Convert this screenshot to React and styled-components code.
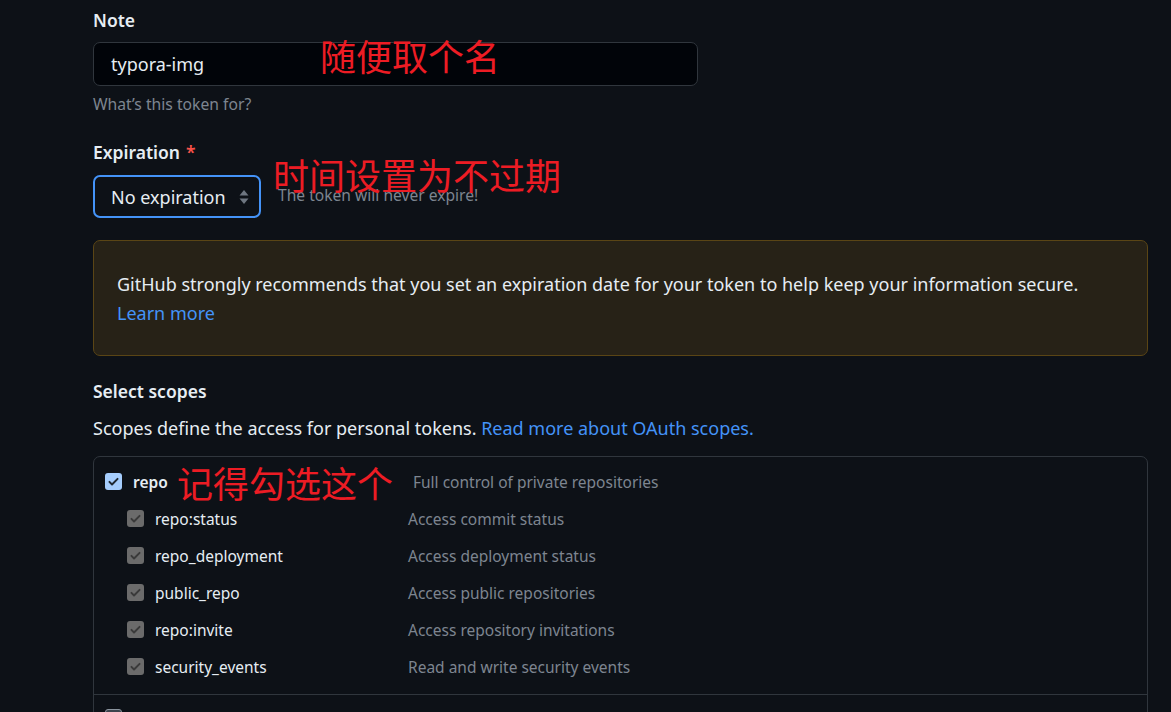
import React from "react";
import styled, { createGlobalStyle } from "styled-components";

const Global = createGlobalStyle`
  html, body { margin: 0; padding: 0; background: #0d1117; overflow: hidden; }
  body { font-family: "Noto Sans", "Open Sans", sans-serif; color: #e6edf3; }
  * { box-sizing: border-box; }
`;

const Page = styled.div`
  width: 1171px;
  height: 712px;
  overflow: hidden;
  padding: 7px 23px 0 93px;
  font-size: 18px;
`;

const Label = styled.div`
  font-weight: 600;
  font-size: 17.5px;
  line-height: 26px;
  margin-top: ${(p) => p.$mt || 0}px;
  margin-bottom: ${(p) => p.$mb || 0}px;
`;

const Required = styled.span`
  color: #f85149;
  margin-left: 6px;
`;

const Anchor = styled.div`
  position: relative;
`;

const Annotation = styled.span`
  position: absolute;
  left: ${(p) => p.$x}px;
  top: ${(p) => p.$y}px;
  font-family: "Noto Sans CJK SC", sans-serif;
  font-size: 36px;
  font-weight: 400;
  line-height: 1;
  color: #ed1c24;
  white-space: nowrap;
  pointer-events: none;
  z-index: 2;
`;

const TextInput = styled.div`
  width: 605px;
  height: 44px;
  background: #010409;
  border: 1px solid #30363d;
  border-radius: 7px;
  display: flex;
  align-items: center;
  padding-left: 17px;
`;

const Hint = styled.div`
  color: #7d8590;
  font-size: 15.7px;
  line-height: 22px;
  margin-top: 7px;
`;

const SelectRow = styled.div`
  display: flex;
  align-items: center;
  gap: 17px;
`;

const Select = styled.div`
  width: 168px;
  height: 43px;
  border: 2px solid #4493f8;
  border-radius: 7px;
  display: flex;
  align-items: center;
  justify-content: space-between;
  padding: 0 10px 0 16px;
`;

const Muted = styled.span`
  color: #7d8590;
  font-size: 15.6px;
  margin-top: -3px;
`;

const Warning = styled.div`
  margin-top: 22px;
  background: #272217;
  border: 1px solid #5a4515;
  border-radius: 7px;
  padding: 29px 23px 27px;
  line-height: 29px;
`;

const Link = styled.span`
  color: #4493f8;
`;

const Paragraph = styled.div`
  line-height: 26px;
  margin-top: 11px;
`;

const ScopeBox = styled.div`
  margin-top: 15px;
  border: 1px solid #30363d;
  border-radius: 7px;
  padding-top: 6px;
  font-size: 15.5px;
`;

const Group = styled.div`
  padding: ${(p) => (p.$last ? "4px 0 0 11px" : "0 0 9px 11px")};
  border-bottom: ${(p) => (p.$last ? "none" : "1px solid #30363d")};
`;

const Row = styled.div`
  position: relative;
  display: flex;
  align-items: center;
  height: 37px;
  padding-left: ${(p) => p.$indent || 0}px;
`;

const Name = styled.div`
  display: flex;
  align-items: center;
  gap: 11px;
  width: ${(p) => p.$w}px;
  font-weight: ${(p) => (p.$bold ? 600 : 400)};
`;

const Desc = styled.div`
  color: #7d8590;
`;

const Box = styled.span`
  width: 17px;
  height: 17px;
  border-radius: 3px;
  display: inline-flex;
  align-items: center;
  justify-content: center;
  flex: none;
  background: ${(p) => (p.$kind === "on" ? "#a5cdfd" : p.$kind === "dis" ? "#6b6b6b" : "#3d444d")};
  border: ${(p) => (p.$kind === "off" ? "1px solid #8b949e" : "none")};
`;

const Check = ({ kind }) => (
  <Box $kind={kind}>
    {kind !== "off" && (
      <svg width="13" height="13" viewBox="0 0 16 16">
        <path
          d="M3 8.5l3.2 3.2L13 4.8"
          fill="none"
          stroke={kind === "on" ? "#1f2933" : "#3a3a3a"}
          strokeWidth="2.4"
          strokeLinecap="round"
          strokeLinejoin="round"
        />
      </svg>
    )}
  </Box>
);

const Arrows = () => (
  <svg width="10" height="16" viewBox="0 0 10 16">
    <path d="M5 1L9.5 6.5H0.5z" fill="#6e7681" />
    <path d="M5 15L9.5 9.5H0.5z" fill="#6e7681" />
  </svg>
);

const subScopes = [
  ["repo:status", "Access commit status"],
  ["repo_deployment", "Access deployment status"],
  ["public_repo", "Access public repositories"],
  ["repo:invite", "Access repository invitations"],
  ["security_events", "Read and write security events"],
];

export default function App() {
  return (
    <>
      <Global />
      <Page>
        <Label $mb={9}>Note</Label>
        <Anchor>
          <TextInput>typora-img</TextInput>
          <Annotation $x={227} $y={-5}>随便取个名</Annotation>
        </Anchor>
        <Hint>What’s this token for?</Hint>

        <Label $mt={24} $mb={10}>
          Expiration<Required>*</Required>
        </Label>
        <Anchor>
          <SelectRow>
            <Select>
              <span>No expiration</span>
              <Arrows />
            </Select>
            <Muted>The token will never expire!</Muted>
          </SelectRow>
          <Annotation $x={180} $y={-19}>时间设置为不过期</Annotation>
        </Anchor>

        <Warning>
          GitHub strongly recommends that you set an expiration date for your token to help keep your information secure.
          <br />
          <Link>Learn more</Link>
        </Warning>

        <Label $mt={22}>Select scopes</Label>
        <Paragraph>
          Scopes define the access for personal tokens. <Link>Read more about OAuth scopes.</Link>
        </Paragraph>

        <ScopeBox>
          <Group>
            <Row>
              <Name $w={308} $bold>
                <Check kind="on" />
                repo
              </Name>
              <Desc>Full control of private repositories</Desc>
              <Annotation $x={72} $y={1}>记得勾选这个</Annotation>
            </Row>
            {subScopes.map(([n, d]) => (
              <Row key={n} $indent={22}>
                <Name $w={281}>
                  <Check kind="dis" />
                  {n}
                </Name>
                <Desc>{d}</Desc>
              </Row>
            ))}
          </Group>
          <Group $last>
            <Row>
              <Name $w={308} $bold>
                <Check kind="off" />
              </Name>
            </Row>
          </Group>
        </ScopeBox>
      </Page>
    </>
  );
}
